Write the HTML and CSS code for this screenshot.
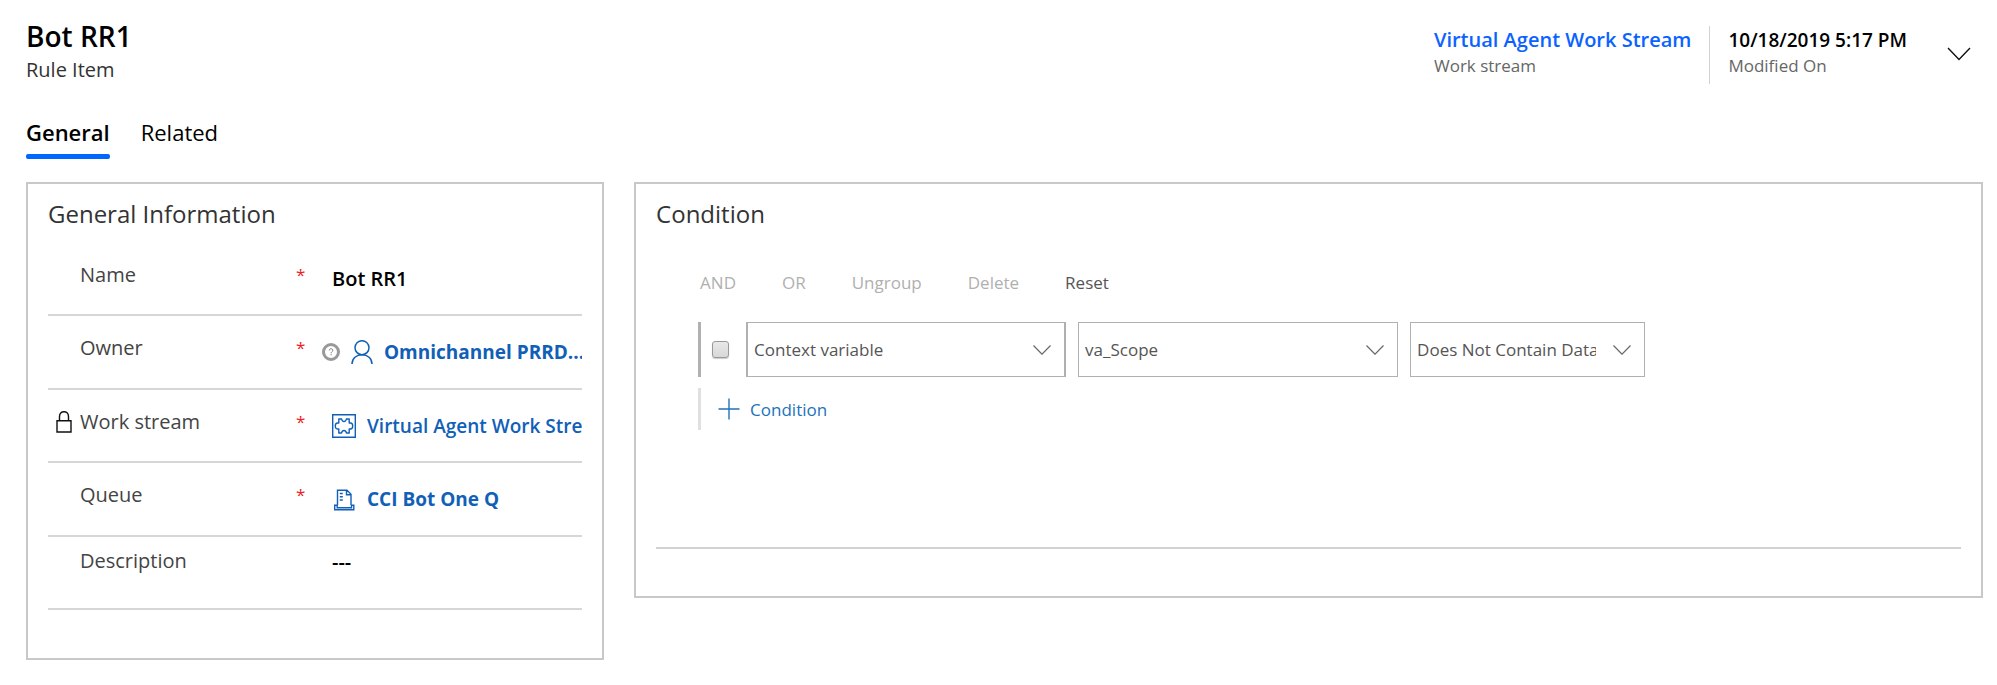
FILE: index.html
```html
<!DOCTYPE html>
<html lang="en">
<head>
<meta charset="utf-8">
<title>Bot RR1 - Rule Item</title>
<meta name="viewport" content="width=device-width, initial-scale=1">
<link rel="stylesheet" href="styles.css">
</head>
<body>
<header class="header">
  <div class="heading">
    <h1 class="title">Bot RR1</h1>
    <p class="subtitle">Rule Item</p>
  </div>
  <div class="summary">
    <div class="fact">
      <a class="fact-value fact-link" href="#stream">Virtual Agent Work Stream</a>
      <span class="fact-name">Work stream</span>
    </div>
    <div class="fact fact-split">
      <span class="fact-value">10/18/2019 5:17 PM</span>
      <span class="fact-name">Modified On</span>
    </div>
    <button class="expand" type="button" aria-label="Show more header fields">
      <svg width="24" height="14" viewBox="0 0 24 14" fill="none" stroke="#111" stroke-width="1.4"><path d="M1 1l11 11.5L23 1"/></svg>
    </button>
  </div>
</header>

<nav class="tabs">
  <button class="tab tab-active" type="button">General</button>
  <button class="tab" type="button">Related</button>
</nav>

<main class="panels">
  <section class="panel panel-general">
    <h2 class="panel-title">General Information</h2>
    <div class="fields">
      <div class="field">
        <span class="lock"></span>
        <label class="label" for="name">Name</label>
        <span class="required">*</span>
        <div class="value"><input class="text" id="name" type="text" value="Bot RR1"></div>
      </div>
      <div class="field">
        <span class="lock"></span>
        <span class="label">Owner</span>
        <span class="required">*</span>
        <div class="value value-presence">
          <svg class="presence" width="18" height="18" viewBox="0 0 18 18" fill="none"><circle cx="9" cy="9" r="7.5" stroke="#999" stroke-width="3"/><path d="M7.3 7.4c0-2.2 3.5-2.2 3.5 0 0 1.3-1.7 1.3-1.7 2.9M9.1 11.200v1.100" stroke="#777" stroke-width="1"/></svg>
          <svg class="icon" width="22" height="24" viewBox="0 0 22 24" fill="none" stroke="#1160b7" stroke-width="1.5"><circle cx="11" cy="7.7" r="7"/><path d="M1 24c0-5.500 4.400-9.300 10-9.300s10 3.800 10 9.300"/></svg>
          <a class="lookup" href="#owner">Omnichannel PRRD...</a>
        </div>
      </div>
      <div class="field">
        <span class="lock"><svg width="16" height="22" viewBox="0 0 16 22" fill="none" stroke="#111" stroke-width="1.4"><path d="M1 9.700h14v11.300H1zM3.500 9.500V5.500C3.500 2.500 5.300.8 8 .8s4.500 1.700 4.500 4.700v4"/></svg></span>
        <span class="label">Work stream</span>
        <span class="required">*</span>
        <div class="value">
          <svg class="icon" width="24" height="24" viewBox="0 0 24 24" fill="none" stroke="#1160b7" stroke-width="1.4"><path d="M.7.7h22.600v22.600H.7z"/><path stroke-linejoin="round" d="M6.800 9V5h2.800c.3 1.700.9 2.500 2.400 2.500s2.100-.8 2.400-2.500h2.800v4h1.300c1.500 0 2.200 1.200 2.200 3s-.7 3-2.200 3h-1.300v4h-2.800c-.3-1.700-.9-2.500-2.400-2.500s-2.100.8-2.400 2.500H6.800v-4H5.500c-1.500 0-2.200-1.200-2.200-3S4 9 5.500 9z"/></svg>
          <a class="lookup lookup-medium" href="#stream">Virtual Agent Work Stream</a>
        </div>
      </div>
      <div class="field">
        <span class="lock"></span>
        <span class="label">Queue</span>
        <span class="required">*</span>
        <div class="value">
          <svg class="icon" width="24" height="24" viewBox="0 0 24 24" fill="none" stroke="#1160b7" stroke-width="1.4"><path d="M5.500 18V3.200h9.500l4 4V18M14.500 3.200v4.500H19M7.800 6.500h3M7.800 9.800h3M7.800 13h3M2.700 18.200h2.500v2.500h14.300v-2.500h2.300v4.600H2.700z"/></svg>
          <a class="lookup" href="#queue">CCI Bot One Q</a>
        </div>
      </div>
      <div class="field field-top">
        <span class="lock"></span>
        <label class="label" for="description">Description</label>
        <span class="required"></span>
        <div class="value"><input class="text" id="description" type="text" value="---"></div>
      </div>
    </div>
  </section>

  <section class="panel panel-condition">
    <h2 class="panel-title">Condition</h2>
    <div class="builder">
      <div class="toolbar">
        <button class="action" type="button" disabled>AND</button>
        <button class="action" type="button" disabled>OR</button>
        <button class="action" type="button" disabled>Ungroup</button>
        <button class="action" type="button" disabled>Delete</button>
        <button class="action" type="button">Reset</button>
      </div>
      <div class="rule">
        <input class="check" type="checkbox" aria-label="Select condition">
        <div class="picker picker-strong">
          <select class="select" aria-label="Entity"><option>Context variable</option></select>
          <svg class="chevron" width="18" height="10" viewBox="0 0 18 10" fill="none" stroke="#666" stroke-width="1.2"><path d="M.5.5L9 9.200 17.500.5"/></svg>
        </div>
        <div class="picker">
          <select class="select" aria-label="Variable"><option>va_Scope</option></select>
          <svg class="chevron" width="18" height="10" viewBox="0 0 18 10" fill="none" stroke="#666" stroke-width="1.2"><path d="M.5.5L9 9.200 17.500.5"/></svg>
        </div>
        <div class="picker picker-operator">
          <select class="select" aria-label="Operator"><option>Does Not Contain Data</option></select>
          <svg class="chevron" width="18" height="10" viewBox="0 0 18 10" fill="none" stroke="#666" stroke-width="1.2"><path d="M.5.5L9 9.200 17.500.5"/></svg>
        </div>
      </div>
      <div class="add-row">
        <button class="add" type="button">
          <svg width="22" height="22" viewBox="0 0 22 22" fill="none" stroke="#2272b9" stroke-width="1.4"><path d="M11 .5v21M.5 11h21"/></svg>
          Condition
        </button>
      </div>
    </div>
  </section>
</main>
</body>
</html>
```

FILE: styles.css
```css
* { box-sizing: border-box; }

body {
  margin: 0;
  padding: 16px 14px 24px 26px;
  background: #fff;
  color: #000;
  font-family: "Open Sans", "Noto Sans", sans-serif;
  font-size: 20px;
}

h1, h2, p { margin: 0; }

button, input, select { font: inherit; color: inherit; }

button {
  padding: 0;
  border: 0;
  background: none;
  cursor: pointer;
}

a { text-decoration: none; }
svg { display: block; flex: none; }

.header {
  display: flex;
  justify-content: space-between;
  align-items: flex-start;
}

.title {
  font-size: 28px;
  line-height: 40px;
  font-weight: 600;
}

.subtitle {
  font-size: 20px;
  line-height: 28px;
  color: #333;
}

.summary {
  display: flex;
  padding: 10px 12px 0 0;
}

.fact {
  display: flex;
  flex-direction: column;
  height: 58px;
  padding-right: 18px;
}

.fact-split {
  border-left: 1px solid #d2d2d2;
  padding: 0 0 0 18px;
}

.fact-value {
  font-size: 19px;
  line-height: 28px;
  font-weight: 600;
}

.fact-link {
  font-size: 20px;
  color: #0b63ff;
}

.fact-name {
  font-size: 17px;
  line-height: 24px;
  color: #666;
}

.expand {
  align-self: flex-start;
  margin: 21px 0 0 40px;
}

.tabs {
  display: flex;
  gap: 31px;
  margin-top: 30px;
}

.tab {
  font-size: 22px;
  line-height: 36px;
  padding-bottom: 4px;
  border-bottom: 5px solid transparent;
}

.tab-active {
  font-weight: 600;
  position: relative;
}

.tab-active::after {
  content: "";
  position: absolute;
  left: 0;
  right: 0;
  bottom: -5px;
  height: 5px;
  border-radius: 2px;
  background: #0066ff;
}

.panels {
  display: grid;
  grid-template-columns: 30fr 70fr;
  gap: 30px;
  align-items: start;
  margin-top: 23px;
}

.panel {
  min-width: 0;
  border: 2px solid #c8c8c8;
  padding: 12px 20px 0;
}

.panel-general { padding-bottom: 48px; }

.panel-title {
  font-size: 24px;
  line-height: 36px;
  font-weight: 400;
  color: #333;
}

.fields { padding-top: 11px; }

.field {
  display: grid;
  grid-template-columns: 32px 216px 36px minmax(0, 1fr);
  align-items: center;
  height: 74px;
  padding-bottom: 8px;
  border-bottom: 2px solid #d6d6d6;
}

.field:nth-child(odd) { height: 73px; }

.field-top {
  align-items: start;
  padding-top: 10px;
}

.lock { padding-left: 8px; }

.label {
  color: #444;
  line-height: 28px;
}

.required {
  color: #ed1c24;
  font-size: 17px;
  line-height: 28px;
}

.value {
  display: flex;
  align-items: center;
  min-width: 0;
  padding-top: 8px;
}

.value-presence { margin-left: -10px; }
.field-top .value { padding-top: 0; }
.presence { margin-right: 11px; }
.icon { margin-right: 11px; }

.text {
  width: 100%;
  min-width: 0;
  height: 28px;
  padding: 0;
  border: 0;
  outline: 0;
  background: none;
  font-size: 20px;
  font-weight: 600;
}

.lookup {
  min-width: 0;
  overflow: hidden;
  white-space: nowrap;
  font-size: 19px;
  line-height: 28px;
  font-weight: 700;
  color: #1160b7;
}

.lookup-medium { font-weight: 600; }

.builder {
  margin-top: 37px;
  margin-bottom: 47px;
  padding: 0 0 117px 42px;
  border-bottom: 2px solid #d2d2d2;
}

.toolbar {
  display: flex;
  gap: 46px;
  padding-left: 2px;
}

.action {
  font-size: 17px;
  line-height: 28px;
  color: #555;
}

.action:disabled { color: #b0b0b0; }

.rule {
  display: flex;
  align-items: center;
  gap: 12px;
  height: 55px;
  margin-top: 25px;
  border-left: 3px solid #b0b0b0;
}

.check {
  appearance: none;
  width: 17px;
  height: 17px;
  margin: 0 5px 0 11px;
  border: 1px solid #999;
  border-radius: 3px;
  background: linear-gradient(#e8e8e8, #d8d8d8);
  box-shadow: 0 1px 1px #ccc;
}

.picker {
  display: grid;
  align-items: center;
  flex: 0 1 320px;
  min-width: 0;
  height: 55px;
  border: 1px solid #b0b0b0;
}

.picker-strong { border-width: 1px 2px; }
.picker-operator { flex-basis: 235px; }

.select, .chevron { grid-area: 1 / 1; }

.select {
  appearance: none;
  width: 100%;
  height: 100%;
  padding: 0 48px 0 6px;
  border: 0;
  border-radius: 0;
  background: none;
  color: #555;
  font-size: 17px;
}

.chevron {
  justify-self: end;
  margin-right: 13px;
  pointer-events: none;
}

.add-row {
  display: flex;
  height: 42px;
  margin-top: 11px;
  padding-left: 17px;
  border-left: 3px solid #e0e0e0;
}

.add {
  display: flex;
  align-items: center;
  gap: 10px;
  font-size: 17px;
  color: #2272b9;
}
```
